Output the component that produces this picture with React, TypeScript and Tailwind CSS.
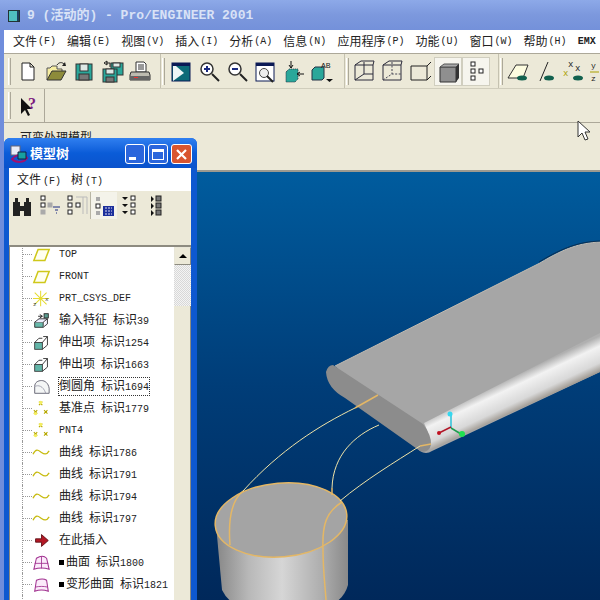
const cjk = "[font-family:'Liberation_Sans','Noto_Sans_CJK_SC',sans-serif]";
const mono = "[font-family:'Liberation_Mono','Noto_Sans_CJK_SC',monospace]";

const menus = [
  ["文件", "F"],
  ["编辑", "E"],
  ["视图", "V"],
  ["插入", "I"],
  ["分析", "A"],
  ["信息", "N"],
  ["应用程序", "P"],
  ["功能", "U"],
  ["窗口", "W"],
  ["帮助", "H"],
];

const Svg = ({ children, w = 24, h = 24 }: { children: React.ReactNode; w?: number; h?: number }) => (
  <svg width={w} height={h} viewBox={`0 0 ${w} ${h}`} className="shrink-0">
    {children}
  </svg>
);

// toolbar drawings
const tools: Record<string, React.ReactNode> = {
  new: <path d="M6 4h8l4 4v13H6z M14 4v4h4" fill="#fff" stroke="#222" />,
  open: (
    <>
      <path d="M3 21V9h3l2-2h5v3h5v3" fill="#f6eda0" stroke="#555" />
      <path d="M3 21l5-9h14l-5 9z" fill="#8d8b3a" stroke="#333" />
      <path d="M13 6c2-3 5-3 7-1" fill="none" stroke="#222" />
      <path d="M18 7h4l-1-4z" fill="#222" />
    </>
  ),
  save: (
    <>
      <rect x="4" y="5" width="16" height="16" fill="#2aa79a" stroke="#333" />
      <rect x="8" y="5" width="8" height="7" fill="#dfe9e6" stroke="#333" />
      <rect x="7" y="15" width="10" height="6" fill="#777" stroke="#333" />
    </>
  ),
  saveas: (
    <>
      <rect x="11" y="4" width="12" height="12" fill="#2aa79a" stroke="#333" />
      <rect x="13" y="4" width="7" height="4" fill="#dfe9e6" stroke="#333" />
      <rect x="3" y="10" width="14" height="13" fill="#2aa79a" stroke="#333" />
      <rect x="6" y="10" width="8" height="5" fill="#dfe9e6" stroke="#333" />
      <rect x="6" y="18" width="8" height="5" fill="#777" stroke="#333" />
      <path d="M4 4l3-2v4z M6 4h4v4" fill="none" stroke="#222" />
    </>
  ),
  print: (
    <>
      <path d="M8 3h8l2 2v8H8z M10 6h6 M10 8h6 M10 10h6" fill="#fff" stroke="#333" />
      <path d="M3 13h18l1 3v5H2v-5z" fill="#bdbbb0" stroke="#333" />
      <rect x="2" y="17" width="20" height="4" fill="#666" />
      <rect x="6" y="18" width="4" height="1" fill="#e33" />
    </>
  ),
  repaint: (
    <>
      <rect x="3" y="4" width="18" height="18" fill="#0d6b78" stroke="#0b1a55" />
      <rect x="3" y="4" width="18" height="3" fill="#0b1a55" />
      <path d="M4 7h3l8 7-11 8z" fill="#eef6f6" />
    </>
  ),
  zoomin: (
    <>
      <circle cx="10" cy="10" r="6" fill="#fff" stroke="#333" strokeWidth="1.5" />
      <path d="M15 15l7 7" stroke="#222" strokeWidth="2" />
      <path d="M7 10h6 M10 7v6" stroke="#1a2a80" strokeWidth="2" />
    </>
  ),
  zoomout: (
    <>
      <circle cx="10" cy="10" r="6" fill="#fff" stroke="#333" strokeWidth="1.5" />
      <path d="M15 15l7 7" stroke="#222" strokeWidth="2" />
      <path d="M7 10h6" stroke="#1a2a80" strokeWidth="2" />
    </>
  ),
  refit: (
    <>
      <rect x="3" y="4" width="18" height="18" fill="#fff" stroke="#0b1a55" />
      <rect x="3" y="4" width="18" height="3" fill="#0b1a55" />
      <circle cx="11" cy="14" r="4.5" fill="#eee" stroke="#444" />
      <path d="M14 17l6 6" stroke="#222" strokeWidth="2" />
    </>
  ),
  orient: (
    <>
      <path d="M5 13l3-3h9v10l-3 3H5z" fill="#2aa79a" stroke="#234" strokeDasharray="1 1" />
      <path d="M10 2v7 M8 6l2 3 2-3 M23 15h-6 M19 13l-3 2 3 2" fill="none" stroke="#111" />
    </>
  ),
  appearance: (
    <>
      <path d="M3 11l3-3h9v11l-2 2H3z" fill="#2aa79a" stroke="#234" />
      <text x="12" y="9" fontSize="8" fontFamily="Liberation Mono" fill="#222">AB</text>
      <path d="M17 20h7l-3.500 3z" fill="#111" />
    </>
  ),
  wire: (
    <path d="M3 6h18v15H3zM3 6l6-4h13l-1 4M3 21l9-6h9M12 3v12" fill="none" stroke="#2a2a3a" />
  ),
  hidden: (
    <>
      <path d="M3 6h18v15H3zM3 6l6-4h13l-1 4" fill="none" stroke="#2a2a3a" />
      <path d="M3 21l9-6h9M12 3v12" fill="none" stroke="#445" strokeDasharray="2 1.500" />
    </>
  ),
  nohidden: (
    <path d="M3 7h16v14H3zM19 7l4-4M19 21l4-4" fill="none" stroke="#222" />
  ),
  shade: (
    <>
      <path d="M4 8h16v15H4z" fill="#8f8f8f" stroke="#333" />
      <path d="M4 8l4-3h15l-3 3z" fill="#aaa" stroke="#555" />
      <path d="M20 8l3-3v14l-3 4z" fill="#333" />
    </>
  ),
  nodes: (
    <g fill="#fff" stroke="#222">
      <rect x="7" y="3" width="4" height="4" />
      <rect x="7" y="10" width="4" height="4" />
      <rect x="7" y="17" width="4" height="4" />
      <rect x="15" y="10" width="4" height="4" />
    </g>
  ),
  planes: (
    <>
      <path d="M2 19L10 6h12l-5 13z" fill="#fdfce0" stroke="#333" />
      <ellipse cx="16" cy="19" rx="5" ry="2.500" fill="#12614e" />
    </>
  ),
  axes: (
    <>
      <path d="M6 22L14 3" stroke="#222" />
      <ellipse cx="15" cy="19" rx="5" ry="2.500" fill="#12614e" />
    </>
  ),
  points: (
    <>
      <text x="6" y="8" fontSize="9" fontFamily="Liberation Mono" fill="#222">x</text>
      <text x="1" y="17" fontSize="9" fontFamily="Liberation Mono" fill="#a9a000">x</text>
      <text x="13" y="12" fontSize="9" fontFamily="Liberation Mono" fill="#222">x</text>
      <ellipse cx="16" cy="19" rx="5" ry="2.500" fill="#12614e" />
    </>
  ),
  csys: (
    <>
      <text x="1" y="9" fontSize="8" fontFamily="Liberation Mono" fill="#222">y</text>
      <text x="1" y="22" fontSize="8" fontFamily="Liberation Mono" fill="#222">z</text>
      <path d="M0 13h9" stroke="#a9a000" />
    </>
  ),
};

const group1 = ["new", "open", "save", "saveas", "print"];
const group2 = ["repaint", "zoomin", "zoomout", "refit", "orient", "appearance"];
const group3 = ["wire", "hidden", "nohidden", "shade", "nodes"];
const group4 = ["planes", "axes", "points", "csys"];

const Grip = () => <div className="mx-[1px] h-[27px] w-[3px] shrink-0 border-x border-x-[#fff] border-r-[#aca899]" />;

const Divider = () => <div className="h-[35px] w-[1px] shrink-0 bg-[#c5c2b0]" />;

const Tool = ({ name, active }: { name: string; active?: boolean }) => (
  <div
    className={`flex h-[29px] w-[28px] shrink-0 items-center justify-center ${
      active ? "border border-[#d0cebf] bg-[#f6f5ee]" : ""
    }`}
  >
    <Svg>{tools[name]}</Svg>
  </div>
);

// tree drawings, 22 x 20
const treeIcons: Record<string, React.ReactNode> = {
  plane: <path d="M2 17L7 4h13l-5 13z" fill="#fffff0" stroke="#cfc81a" strokeWidth="1.800" />,
  csys: (
    <>
      <path d="M3 3l14 14M17 3L3 17M10 1v18M1 10h19" stroke="#e6dc30" strokeWidth="1.200" />
      <text x="1" y="19" fontSize="7" fontFamily="Liberation Mono" fill="#333">z</text>
      <text x="15" y="13" fontSize="7" fontFamily="Liberation Mono" fill="#333">x</text>
    </>
  ),
  import: (
    <>
      <path d="M3 12h10v6H3z" fill="#68b9ab" stroke="#222" />
      <path d="M3 12l5-4h10l-5 4M18 8v6l-5 4" fill="#eef" stroke="#222" />
      <path d="M7 5h5M9 3l3 2-3 2" fill="none" stroke="#111" />
      <rect x="14" y="2" width="5" height="5" fill="#5c9c90" stroke="#222" />
    </>
  ),
  extrude: (
    <>
      <rect x="3" y="10" width="9" height="8" fill="#62b5a8" stroke="#333" />
      <path d="M3 10l5-5h4M12 18l6-5V3h-5M18 3l-6 7" fill="none" stroke="#222" />
    </>
  ),
  round: (
    <>
      <path d="M3 18V10C3 5 7 3 11 3s8 3 9 9v6z" fill="#f4f6f6" stroke="#556" />
      <path d="M3 10c4-2 10-1 13 8" fill="none" stroke="#99a" />
    </>
  ),
  point: (
    <g stroke="#b6a800" strokeWidth="1.300" fill="none">
      <path d="M8 2l4 4M12 2L8 6M2 12l4 4M6 12l-4 4M14 12l4 4M18 12l-4 4" />
      <circle cx="4" cy="16" r="2" fill="#f4ee60" stroke="none" />
      <circle cx="10" cy="3" r="2" fill="#f4ee60" stroke="none" />
    </g>
  ),
  curve: <path d="M1 12c4-8 7-4 10-2s6 3 9-2" fill="none" stroke="#c7bb10" strokeWidth="1.500" />,
  insert: <path d="M4 8h7V3l8 7-8 7v-5H4z" fill="#b31825" stroke="#5a0c12" />,
  surface: (
    <>
      <path d="M2 18L5 5c5-3 9-3 12 0l3 13c-6-2-12-2-18 0z" fill="#fbeafa" stroke="#a0308f" strokeWidth="1.200" />
      <path d="M3 11h16M11 3v14" stroke="#a0308f" />
    </>
  ),
  warp: (
    <>
      <path d="M3 18L5 5c5-2 9-2 12 0l2 13c-5-2-11-2-16 0z" fill="#fbeafa" stroke="#a0308f" strokeWidth="1.200" />
      <path d="M4 13c4-1 10-1 14 0" stroke="#a0308f" fill="none" />
    </>
  ),
};

type Row = { icon: string; name?: string; id?: string; code?: string; mark?: boolean; focus?: boolean };

const rows: Row[] = [
  { icon: "plane", code: "TOP" },
  { icon: "plane", code: "FRONT" },
  { icon: "csys", code: "PRT_CSYS_DEF" },
  { icon: "import", name: "输入特征", id: "39" },
  { icon: "extrude", name: "伸出项", id: "1254" },
  { icon: "extrude", name: "伸出项", id: "1663" },
  { icon: "round", name: "倒圆角", id: "1694", focus: true },
  { icon: "point", name: "基准点", id: "1779" },
  { icon: "point", code: "PNT4" },
  { icon: "curve", name: "曲线", id: "1786" },
  { icon: "curve", name: "曲线", id: "1791" },
  { icon: "curve", name: "曲线", id: "1794" },
  { icon: "curve", name: "曲线", id: "1797" },
  { icon: "insert", name: "在此插入" },
  { icon: "surface", name: "曲面", id: "1800", mark: true },
  { icon: "warp", name: "变形曲面", id: "1821", mark: true },
  { icon: "surface" },
];

const TreeRow = ({ row }: { row: Row }) => (
  <div className="ml-[12px] flex h-[22px] items-center border-l border-dotted border-l-[#999]">
    <div className="w-[9px] shrink-0 border-t border-dotted border-t-[#999]" />
    <svg width="19" height="17" viewBox="0 0 22 20" className="shrink-0">
      {treeIcons[row.icon]}
    </svg>
    <div
      className={`ml-[8px] flex h-[17px] items-center whitespace-nowrap text-[12px] text-[#222] ${
        row.focus ? "outline outline-1 outline-dotted outline-[#333]" : ""
      }`}
    >
      {row.code && <span className={`${mono} text-[10px]`}>{row.code}</span>}
      {row.mark && <span className="mr-[2px] h-[5px] w-[5px] bg-black" />}
      {row.name && <span>{row.name}</span>}
      {row.id && (
        <span className="ml-[6px]">
          标识<span className={`${mono} text-[10px]`}>{row.id}</span>
        </span>
      )}
    </div>
  </div>
);

const treeTools: React.ReactNode[] = [
  <path key="a" d="M2 8h7v14H2zM13 8h7v14h-7zM9 12h4v5H9zM4 4h3v4H4zM15 4h3v4h-3z" fill="#222" />,
  <g key="b" fill="#fff" stroke="#222">
    <rect x="3" y="2" width="4" height="4" />
    <rect x="3" y="9" width="4" height="4" />
    <rect x="3" y="16" width="4" height="4" fill="#aaa" stroke="#aaa" />
    <rect x="10" y="9" width="4" height="4" fill="#aaa" stroke="#aaa" />
    <path d="M15 13h7M17 16h3M18 19h1" stroke="#1a2a80" />
  </g>,
  <g key="c" fill="#fff" stroke="#222">
    <rect x="3" y="2" width="4" height="4" />
    <rect x="3" y="9" width="4" height="4" />
    <rect x="3" y="16" width="4" height="4" />
    <rect x="11" y="9" width="4" height="4" />
    <path d="M18 3v17M22 3v17M11 3h11" stroke="#bbb" fill="none" />
  </g>,
  <g key="d">
    <rect x="4" y="3" width="4" height="4" fill="#aaa" />
    <rect x="4" y="10" width="4" height="4" fill="#fff" stroke="#222" />
    <rect x="4" y="17" width="4" height="4" fill="#aaa" />
    <path d="M11 12h11v10H11z" fill="#1c2f9c" />
    <path d="M13 14h7M13 17h7M13 20h7" stroke="#dde" strokeDasharray="2 1" />
  </g>,
  <g key="e" fill="#fff" stroke="#222">
    <path d="M3 3h6l-3 3zM3 10h6l-3 3zM3 17h6l-3 3z" fill="#111" stroke="none" />
    <rect x="12" y="2" width="4" height="4" />
    <rect x="12" y="9" width="4" height="4" />
    <rect x="12" y="16" width="4" height="4" />
  </g>,
  <g key="f">
    <path d="M5 2l3 3-3 3zM5 9l3 3-3 3zM5 16l3 3-3 3z" fill="#111" />
    <rect x="10" y="2" width="5" height="5" fill="#777" stroke="#222" />
    <rect x="10" y="9" width="5" height="5" fill="#777" stroke="#222" />
    <rect x="10" y="16" width="5" height="5" fill="#777" stroke="#222" />
  </g>,
];

const ModelScene = () => (
  <svg viewBox="4 172 596 428" className="h-full w-full">
    <defs>
      <linearGradient id="band" gradientUnits="userSpaceOnUse" x1="510" y1="378" x2="526" y2="412">
        <stop offset="0" stopColor="#b0b0b0" />
        <stop offset="0.25" stopColor="#f2f2f2" />
        <stop offset="0.65" stopColor="#d8d8d8" />
        <stop offset="1" stopColor="#7d7468" />
      </linearGradient>
      <linearGradient id="cyl" gradientUnits="userSpaceOnUse" x1="215" y1="0" x2="349" y2="0">
        <stop offset="0" stopColor="#858585" />
        <stop offset="0.25" stopColor="#b8b8b8" />
        <stop offset="0.5" stopColor="#d6d6d6" />
        <stop offset="0.8" stopColor="#adadad" />
        <stop offset="1" stopColor="#888888" />
      </linearGradient>
    </defs>

    {/* blade */}
    <path d="M335 366L540 263C565 248 580 243 600 242V372L432 451Q426 455 420 451Z" fill="#a6a6a6" />
    <path d="M600 333L424 423Q431 437 430 450L600 372Z" fill="url(#band)" />
    <path d="M333 365L423 424Q432 436 431 445Q428 454 420 451L345 398Q327 388 326 372Q328 365 333 365Z" fill="#8c8c8c" />
    <path d="M335 366L540 263C565 248 580 243 600 242" fill="none" stroke="#c2bbb0" strokeWidth="1" />
    <path d="M539 262C564 247 579 242 600 241" fill="none" stroke="#0c2440" strokeWidth="0.8" />

    {/* cylinder */}
    <path d="M216 525L222 590Q226 598 232 602H336Q345 596 348 585V520Z" fill="url(#cyl)" />
    <ellipse cx="281" cy="520" rx="66" ry="37" transform="rotate(-5 281 520)" fill="#a4a4a4" stroke="#e4b765" strokeWidth="1.500" />

    {/* edges */}
    <g fill="none" strokeWidth="1.500">
      <path d="M243 491C232 500 228 520 230 545" stroke="#e4b765" />
      <path d="M342 502C326 512 322 525 323 550C323 570 325 585 326 600" stroke="#e4b765" />
      <path d="M332 495V488" stroke="#e4b765" />
      <path d="M355 408L378 395" stroke="#e4b765" />
      <path d="M420 446L431 444" stroke="#e4b765" />
    </g>
    <g fill="none" stroke="#efe3a8" strokeWidth="1">
      <path d="M243 491C280 450 320 425 355 408" />
      <path d="M332 488C333 455 355 435 379 425" />
      <path d="M340 501C365 480 395 462 420 446" />
    </g>

    {/* csys triad */}
    <path d="M451 414V428" stroke="#2ac0d8" strokeWidth="1.500" />
    <path d="M439 433L451 427" stroke="#b01828" strokeWidth="1.500" />
    <path d="M451 428L461 434" stroke="#1f9c50" strokeWidth="1.500" />
    <circle cx="450" cy="414" r="2.500" fill="#35d8f0" />
    <circle cx="439" cy="433" r="2" fill="#c01020" />
    <circle cx="462" cy="434" r="3" fill="#1fe050" />
  </svg>
);

const TreeWindow = () => (
  <div className="absolute left-[4px] top-[138px] flex h-[462px] w-[193px] flex-col overflow-hidden rounded-t-[6px] bg-[#0d58d0]">
    <div className="flex h-[30px] shrink-0 items-center bg-linear-to-b from-[#2f7ff0] via-[#0a5cd8] to-[#0a52cc] pl-[5px] pr-[5px] pt-[2px]">
      <Svg w={20} h={20}>
        <rect x="2" y="2" width="9" height="9" fill="#e8ecf8" stroke="#667" />
        <path d="M3 15c4-5 12-5 15-1-3 5-11 5-15 1z" fill="none" stroke="#a01070" strokeWidth="2" />
        <path d="M9 8h8v7H9z" fill="#18a0a0" stroke="#124" />
      </Svg>
      <span className={`${cjk} ml-[1px] text-[13px] font-bold text-white`}>模型树</span>
      <div className="ml-auto flex gap-[3px]">
        <div className="flex h-[20px] w-[20px] items-end rounded-[3px] border border-white bg-[#2b66dc] p-[3px]">
          <div className="h-[3px] w-[7px] bg-white" />
        </div>
        <div className="flex h-[20px] w-[20px] items-center justify-center rounded-[3px] border border-white bg-[#2b66dc]">
          <div className="h-[11px] w-[12px] border border-t-[3px] border-white" />
        </div>
        <div className="flex h-[20px] w-[21px] items-center justify-center rounded-[3px] border border-white bg-[#d9552f]">
          <svg width="13" height="13" viewBox="0 0 13 13">
            <path d="M2 2l9 9M11 2l-9 9" stroke="#fff" strokeWidth="2.200" />
          </svg>
        </div>
      </div>
    </div>

    <div className="ml-[5px] mr-[6px] flex min-h-0 flex-1 flex-col bg-[#ece9d8]">
      <div className={`${cjk} flex h-[23px] shrink-0 items-center gap-[10px] bg-white pl-[8px] text-[12px] text-[#222]`}>
        <span>
          文件<span className={`${mono} ml-[2px] text-[10px]`}>(F)</span>
        </span>
        <span>
          树<span className={`${mono} ml-[2px] text-[10px]`}>(T)</span>
        </span>
      </div>
      <div className="flex h-[29px] shrink-0 items-center">
        {treeTools.slice(0, 3).map((t, i) => (
          <div key={i} className="flex h-[27px] w-[27px] items-center justify-center">
            <Svg>{t}</Svg>
          </div>
        ))}
        <div className="flex h-[27px] w-[27px] items-center justify-center border-l border-[#b8b5a4] bg-[#f4f3ea]">
          <Svg>{treeTools[3]}</Svg>
        </div>
        {treeTools.slice(4).map((t, i) => (
          <div key={i} className="flex h-[27px] w-[27px] items-center justify-center">
            <Svg>{t}</Svg>
          </div>
        ))}
      </div>
      <div className="h-[25px] shrink-0" />
      <div className="flex min-h-0 flex-1 border-l border-t-2 border-[#8d8b80] bg-white">
        <div className={`${cjk} min-w-0 flex-1 overflow-hidden`}>
          <div className="-mt-[4px]">
            {rows.map((row, i) => (
              <TreeRow key={i} row={row} />
            ))}
          </div>
        </div>
        <div className="flex w-[17px] shrink-0 flex-col bg-[#ece9d8]">
          <div className="flex h-[18px] shrink-0 items-center justify-center border border-[#e8e6d8] border-b-[#8d8b80] border-r-[#8d8b80] bg-[#ece9d8]">
            <div className="h-0 w-0 border-x-[4px] border-b-[4px] border-x-transparent border-b-black" />
          </div>
          <div className="h-[41px] shrink-0 bg-[repeating-conic-gradient(#d8d8d8_0_25%,#f4f4f4_0_50%)] bg-[length:2px_2px]" />
          <div className="flex-1 border-r border-[#8d8b80] border-l-white bg-[#ece9d8]" />
        </div>
      </div>
    </div>
  </div>
);

export default function App() {
  return (
    <div className={`${cjk} relative flex h-[600px] w-[600px] flex-col overflow-hidden bg-[#6f8ddc]`}>
      {/* main title bar */}
      <div className="flex h-[30px] shrink-0 items-center bg-linear-to-b from-[#8da9e8] via-[#7c98dd] to-[#7491da] pl-[8px] pt-[2px]">
        <svg width="12" height="12" viewBox="0 0 12 12" className="shrink-0">
          <rect x="0.500" y="0.500" width="11" height="11" fill="#4fc0c0" stroke="#233" />
          <rect x="9" y="1" width="2" height="10" fill="#1d4060" />
        </svg>
        <span className={`${mono} ml-[7px] text-[13px] font-bold whitespace-pre text-[#d9e2f6]`}>
          9 (活动的) - Pro/ENGINEER 2001
        </span>
      </div>

      <div className="ml-[4px] flex min-h-0 flex-1 flex-col bg-[#ece9d8]">
        {/* menu */}
        <div className="flex h-[23px] shrink-0 items-center gap-[11px] overflow-hidden bg-white pl-[9px] text-[12px] whitespace-nowrap text-[#222]">
          {menus.map(([name, key]) => (
            <span key={key} className="flex items-center">
              {name}
              <span className={`${mono} ml-[1px] text-[10px]`}>({key})</span>
            </span>
          ))}
          <span className={`${mono} text-[10px] font-bold`}>EMX</span>
        </div>

        {/* toolbars */}
        <div className="flex h-[36px] shrink-0 items-center overflow-hidden border-y border-t-[#aca899] border-b-[#d0cdbc] pl-[3px]">
          <Grip />
          <div className="w-[2px] shrink-0" />
          {group1.map((n) => (
            <Tool key={n} name={n} />
          ))}
          <div className="w-[6px] shrink-0" />
          <Divider />
          <Grip />
          <div className="w-[1px] shrink-0" />
          {group2.map((n) => (
            <Tool key={n} name={n} />
          ))}
          <div className="w-[9px] shrink-0" />
          <Divider />
          <Grip />
          {group3.map((n) => (
            <Tool key={n} name={n} active={n === "shade" || n === "nodes"} />
          ))}
          <div className="w-[8px] shrink-0" />
          <Divider />
          <Grip />
          {group4.map((n) => (
            <Tool key={n} name={n} />
          ))}
        </div>
        <div className="flex h-[34px] shrink-0 items-center border-b border-b-[#aca899] pl-[3px]">
          <Grip />
          <div className="flex h-[33px] w-[33px] items-center justify-center border-r border-r-[#aca899]">
            <Svg>
              <path d="M5 4v16l4-4 3 6 2-1-3-6h5z" fill="#111" />
              <text x="12" y="15" fontSize="16" fontWeight="700" fontFamily="Liberation Serif" fill="#7b1a7f">?</text>
            </Svg>
          </div>
        </div>

        {/* message area */}
        <div className="h-[49px] shrink-0 border-b-2 border-b-[#9c9a90] pl-[16px] pt-[6px] text-[12px] text-[#222]">
          可变处理模型
        </div>

        {/* graphics */}
        <div className="min-h-0 flex-1 bg-linear-to-b from-[#005c9e] via-[#003d78] to-[#00285a]">
          <ModelScene />
        </div>
      </div>

      {/* cursor */}
      <svg width="14" height="22" viewBox="0 0 14 22" className="absolute left-[577px] top-[120px]">
        <path d="M1 1v16l4-4 3 7 3-1-3-7h5z" fill="#fff" stroke="#333" />
      </svg>

      <TreeWindow />
    </div>
  );
}
